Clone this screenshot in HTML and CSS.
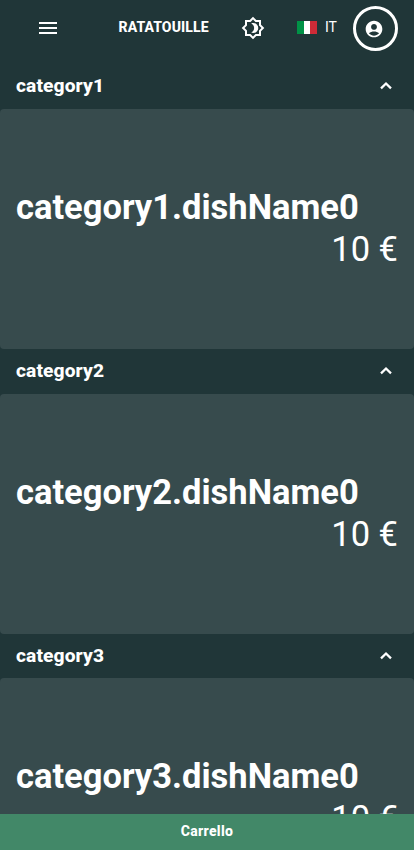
FILE: index.html
```html
<!DOCTYPE html>
<html lang="it">
<head>
<meta charset="utf-8">
<meta name="viewport" content="width=device-width, initial-scale=1">
<title>Ratatouille</title>
<link rel="stylesheet" href="styles.css">
</head>
<body>
<div class="app">
  <header class="topbar">
    <svg class="icon menu" viewBox="0 0 24 24"><path d="M3 18h18v-2H3v2zm0-5h18v-2H3v2zm0-7v2h18V6H3z"/></svg>
    <span class="brand">RATATOUILLE</span>
    <svg class="icon theme" viewBox="0 0 24 24"><path d="M20 8.69V4h-4.69L12 .69 8.69 4H4v4.69L.69 12 4 15.31V20h4.69L12 23.31 15.31 20H20v-4.69L23.31 12 20 8.69zm-2 5.79V18h-3.52L12 20.48 9.52 18H6v-3.52L3.52 12 6 9.52V6h3.52L12 3.52 14.48 6H18v3.52L20.48 12 18 14.48zM12.29 7c-.74 0-1.45.17-2.08.46 1.72.79 2.92 2.53 2.92 4.54s-1.2 3.75-2.92 4.54c.63.29 1.34.46 2.08.46 2.76 0 5-2.24 5-5s-2.24-5-5-5z"/></svg>
    <span class="flag"></span>
    <span class="lang">IT</span>
    <span class="account"><svg class="icon" viewBox="0 0 24 24"><path d="M12 2C6.48 2 2 6.48 2 12s4.48 10 10 10 10-4.48 10-10S17.52 2 12 2zm0 4c1.93 0 3.5 1.57 3.5 3.5S13.93 13 12 13s-3.5-1.57-3.5-3.5S10.07 6 12 6zm0 14c-2.03 0-4.43-.82-6.14-2.88C7.55 15.8 9.68 15 12 15s4.45.8 6.14 2.12C16.43 19.18 14.03 20 12 20z"/></svg></span>
  </header>
  <main class="list">
    <section>
      <div class="category"><h2>category1</h2><svg class="chevron" viewBox="0 0 24 24"><path d="M7 14.3L12 9.5l5 4.8"/></svg></div>
      <article class="card"><h3>category1.dishName0</h3><p>10 €</p></article>
    </section>
    <section>
      <div class="category"><h2>category2</h2><svg class="chevron" viewBox="0 0 24 24"><path d="M7 14.3L12 9.5l5 4.8"/></svg></div>
      <article class="card"><h3>category2.dishName0</h3><p>10 €</p></article>
    </section>
    <section>
      <div class="category"><h2>category3</h2><svg class="chevron" viewBox="0 0 24 24"><path d="M7 14.3L12 9.5l5 4.8"/></svg></div>
      <article class="card"><h3>category3.dishName0</h3><p>10 €</p></article>
    </section>
  </main>
  <footer class="cart">Carrello</footer>
</div>
</body>
</html>
```

FILE: styles.css
```css
* { box-sizing: border-box; margin: 0; padding: 0; }
body { background: #203638; color: #fff; font-family: Roboto, sans-serif; }
.app { height: 850px; display: flex; flex-direction: column; overflow: hidden; }
.icon { display: block; fill: currentColor; flex: none; }
.topbar { height: 56px; flex: none; display: flex; align-items: center; }
.menu { width: 24px; height: 24px; margin-left: 36px; }
.brand { width: 92px; margin-left: 58.5px; font-size: 14px; font-weight: 800; letter-spacing: .1px; line-height: 20px; margin-bottom: 2px; white-space: nowrap; }
.theme { width: 24px; height: 24px; margin-left: 30.5px; }
.flag { width: 20px; height: 13px; margin: 0 0 1px 32px; background: linear-gradient(90deg, #009246 0 33.3%, #fff 33.3% 66.7%, #ce2b37 66.7%); }
.lang { width: 28px; margin-bottom: 2px; padding-left: 8px; font-size: 14px; line-height: 20px; }
.account { width: 45px; height: 45px; margin: 0 0 0 8px; border: 3px solid #fff; border-radius: 50%; display: flex; align-items: center; justify-content: center; }
.account .icon { width: 20px; height: 20px; margin: 1px 3px 0 0; }
.list { flex: 1; min-height: 0; padding-top: 8px; overflow: hidden; }
.category { height: 44.8px; padding: 0 16px; display: flex; align-items: center; justify-content: space-between; }
.category h2 { font-size: 19.2px; line-height: 24px; font-weight: 800; letter-spacing: .1px; }
.chevron { display: block; width: 24px; height: 24px; fill: none; stroke: currentColor; stroke-width: 2.3; }
.card { height: 240px; padding: 0 16px 2px; border-radius: 4px; background: #374b4d; display: flex; flex-direction: column; justify-content: center; }
.card h3 { font-size: 34.5px; line-height: 42px; font-weight: 700; white-space: nowrap; }
.card p { font-size: 34.5px; line-height: 42px; text-align: right; }
.cart { height: 36px; flex: none; display: flex; align-items: center; justify-content: center; padding-bottom: 2px; background: #428868; font-size: 14px; font-weight: 800; letter-spacing: .3px; }
```
